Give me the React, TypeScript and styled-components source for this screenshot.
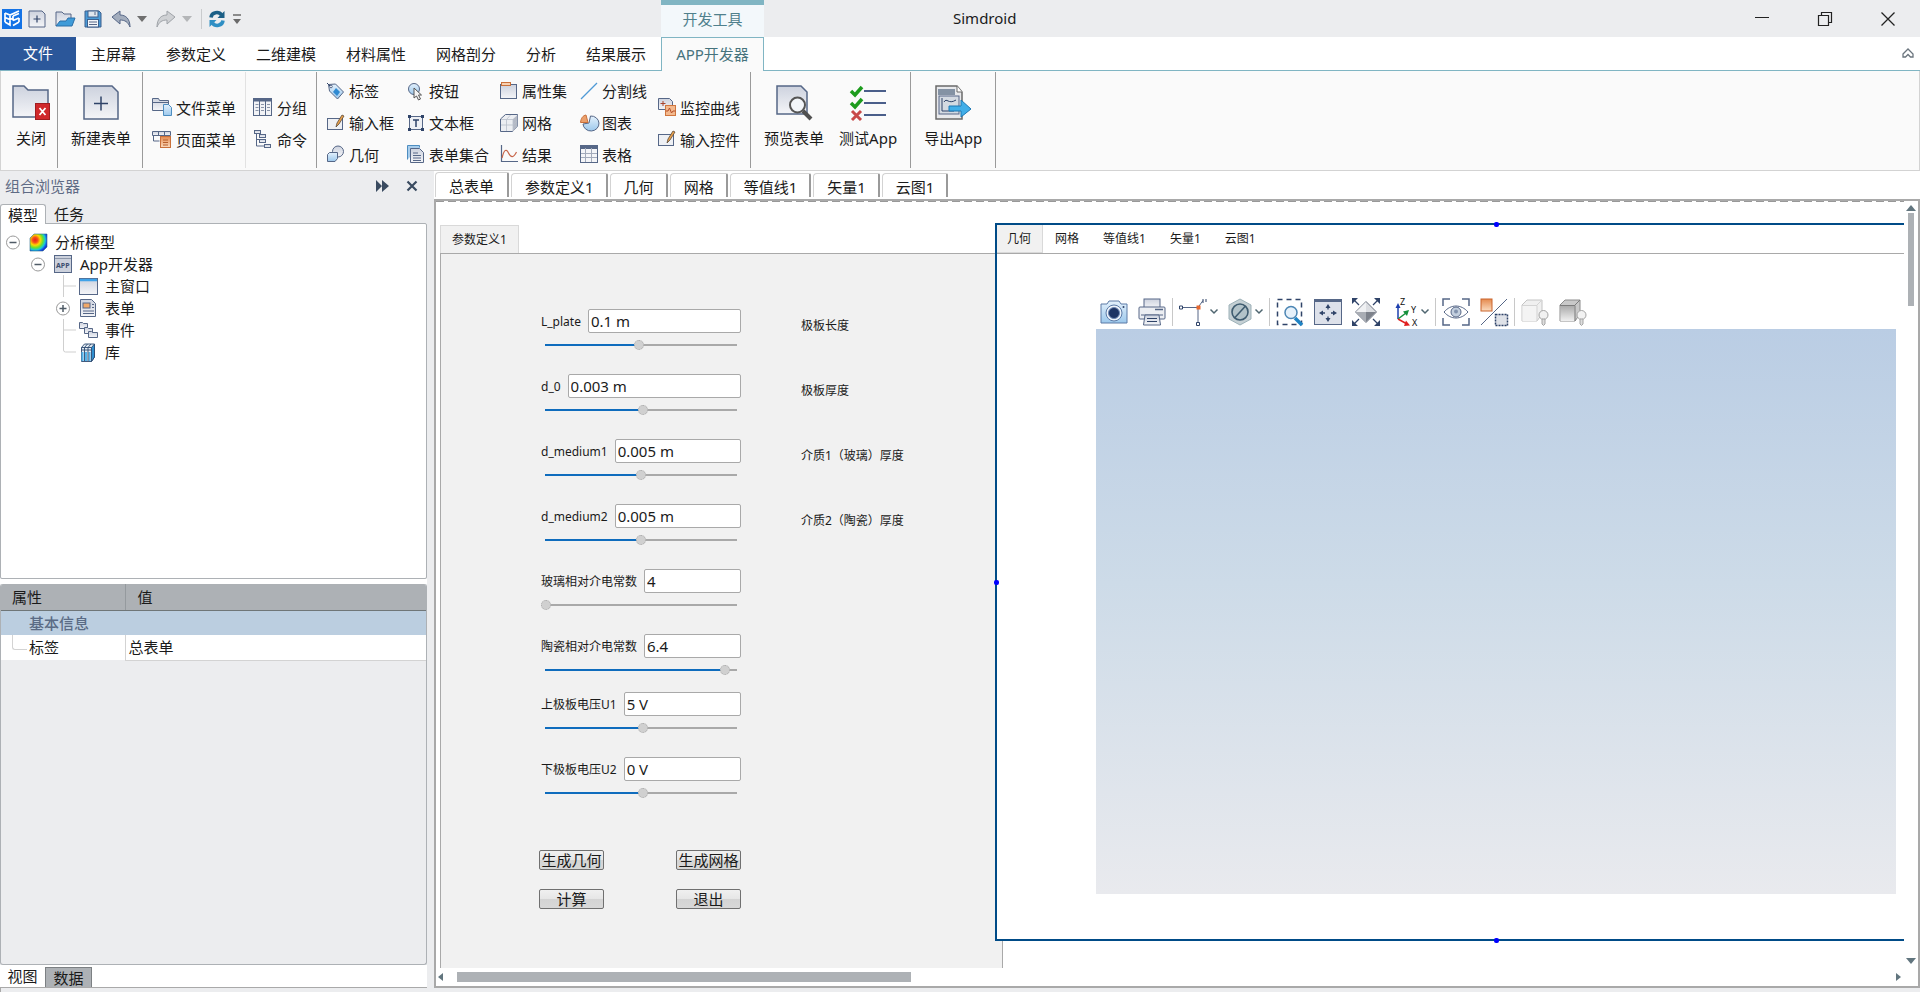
import React, { useState } from 'react';
import styled, { createGlobalStyle, css } from 'styled-components';

const Global = createGlobalStyle`
  * { box-sizing: border-box; }
  html, body { margin: 0; height: 100%; }
  body, button, input {
    font-family: "Noto Sans", "Noto Sans CJK SC", sans-serif;
    font-size: 15px;
    color: #1a1a1a;
  }
  button { background: none; border: 0; padding: 0; margin: 0; cursor: default; white-space: nowrap; }
  ul { list-style: none; margin: 0; padding: 0; }
`;

/* ---------- icons ---------- */

const NAVY = '#566787';
const DARK = '#2f4368';
const STEEL = 'url(#steel)';
const BLUE = 'url(#blue)';
const ORANGE = 'url(#orange)';

const SharedDefs = styled.svg`
  position: absolute;
  width: 0;
  height: 0;
`;

const Gradients = () => (
  <SharedDefs aria-hidden="true">
    <defs>
      <linearGradient id="steel" x1="0" y1="0" x2="0" y2="1">
        <stop offset="0" stopColor="#cdd2de" /><stop offset="1" stopColor="#f4f5f8" />
      </linearGradient>
      <linearGradient id="blue" x1="0" y1="0" x2="0" y2="1">
        <stop offset="0" stopColor="#e4f1fc" /><stop offset="1" stopColor="#9cc8ec" />
      </linearGradient>
      <linearGradient id="orange" x1="0" y1="0" x2="0" y2="1">
        <stop offset="0" stopColor="#e58a4e" /><stop offset="1" stopColor="#fbdcc0" />
      </linearGradient>
      <linearGradient id="gray" x1="0" y1="0" x2="0" y2="1">
        <stop offset="0" stopColor="#a9a9a9" /><stop offset="1" stopColor="#f0f0f0" />
      </linearGradient>
      <radialGradient id="rainbow" cx="0.3" cy="0.35" r="0.85">
        <stop offset="0" stopColor="#e8201c" /><stop offset="0.18" stopColor="#f4501a" />
        <stop offset="0.36" stopColor="#ffd800" /><stop offset="0.54" stopColor="#6be02c" />
        <stop offset="0.7" stopColor="#16c8d8" /><stop offset="0.84" stopColor="#1440e8" />
        <stop offset="1" stopColor="#0a1ca0" />
      </radialGradient>
    </defs>
  </SharedDefs>
);

type IconProps = { w: number; h?: number; children: React.ReactNode };
const Glyph = styled.svg`
  display: block;
  flex: none;
  overflow: visible;
`;
const Icon = ({ w, h = w, children }: IconProps) => (
  <Glyph width={w} height={h} viewBox={`0 0 ${w} ${h}`} fill="none" aria-hidden="true">{children}</Glyph>
);

const LogoIcon = () => (
  <Icon w={20}>
    <rect width="20" height="20" fill="#1473e6" />
    <path d="M3 4l5 2 9-4M3 8.500l5 2 3-1.300M3 13l5 3V6M3 4v9M11 7l6-2.500M11 11.500l6-2.500M11 16.500l6-3.500M11 7v4.500M17 9v4" stroke="#fff" strokeWidth="1.700" />
  </Icon>
);
const NewDocIcon = () => (
  <Icon w={18}>
    <path d="M1 1h13l3 3v13H1z" fill={STEEL} stroke={NAVY} />
    <path d="M9 5.500v7M5.500 9h7" stroke={DARK} strokeWidth="1.200" />
  </Icon>
);
const OpenIcon = () => (
  <Icon w={20} h={18}>
    <path d="M1 16V2h6l2 2h7v4" fill={STEEL} stroke={NAVY} />
    <path d="M1 16l4-5h6l2-3h7l-3 8z" fill="#3f9bd8" stroke="#2b6fa8" />
  </Icon>
);
const SaveIcon = () => (
  <Icon w={18}>
    <path d="M1 1h14l2 2v14H1z" fill="#4a9ad6" stroke="#3c5f8c" />
    <rect x="4" y="1" width="10" height="6" fill="#dfe6ee" stroke="#3c5f8c" />
    <rect x="3.500" y="9.500" width="11" height="7.500" fill="#f4f6f9" stroke="#3c5f8c" />
    <path d="M5 12h8M5 14.500h8M11 2v3" stroke={NAVY} />
  </Icon>
);
const UndoIcon = () => (
  <Icon w={20} h={18}>
    <path d="M1 7l8-6v4c6 0 10 4 10 12-2-5-5-7-10-7v4z" fill="#a3adbd" stroke={NAVY} />
  </Icon>
);
const RedoIcon = () => (
  <Icon w={20} h={18}>
    <path d="M19 7l-8-6v4C5 5 1 9 1 17c2-5 5-7 10-7v4z" fill="#cfd1d4" stroke="#9fa3a8" />
  </Icon>
);
const Caret = ({ color }: { color: string }) => (
  <Icon w={10} h={6}><path d="M0 0h10L5 6z" fill={color} /></Icon>
);
const RefreshIcon = () => (
  <Icon w={18}>
    <path d="M3 7.500C3.500 2 11 1 13.500 5" stroke="#1b5f86" strokeWidth="3.500" />
    <path d="M16.500 1v7h-7z" fill="#1b5f86" />
    <path d="M15 10.500C14.500 16 7 17 4.500 13" stroke="#2f8fc4" strokeWidth="3.500" />
    <path d="M1.500 17v-7h7z" fill="#2f8fc4" />
  </Icon>
);
const CustomizeIcon = () => (
  <Icon w={10} h={12}><path d="M1 2h8" stroke="#8b8b8b" strokeWidth="2" /><path d="M1 6h8l-4 5z" fill="#6a6a6a" /></Icon>
);

const CloseFolderIcon = () => (
  <Icon w={40} h={38}>
    <path d="M2 34V3h11l4 4h20v27z" fill={STEEL} stroke={NAVY} strokeWidth="1.500" />
    <rect x="24.500" y="20.500" width="14" height="16" fill="#d0282b" stroke="#a01c1f" />
    <path d="M28.500 25l6 7M34.500 25l-6 7" stroke="#fff" strokeWidth="1.800" />
  </Icon>
);
const NewFormIcon = () => (
  <Icon w={36} h={38}>
    <path d="M1 3h28l6 6v27H1z" fill={STEEL} stroke={NAVY} strokeWidth="1.500" />
    <path d="M18 13.500v14M11 20.500h14" stroke={DARK} strokeWidth="1.500" />
  </Icon>
);
const FileMenuIcon = () => (
  <Icon w={20} h={18}>
    <path d="M.5 12.500V.5h6l1 2h9v10z" fill={STEEL} stroke={NAVY} />
    <path d="M1 4.500h15" stroke={NAVY} />
    <path d="M11.500 6.500h5l3 3v8h-8z" fill={BLUE} stroke="#4d8dc0" />
  </Icon>
);
const PageMenuIcon = () => (
  <Icon w={20} h={18}>
    <path d="M.5 1.500h18v4H.5zM6.500 1.500v4M12.500 1.500v4" fill={STEEL} stroke={NAVY} />
    <path d="M1.500 6v5h6" stroke={NAVY} />
    <rect x="8.500" y="6.500" width="10" height="11" fill={ORANGE} stroke="#c9703a" />
    <path d="M11 10h5M11 12.500h5M11 15h5" stroke="#b65f2c" />
  </Icon>
);
const GroupIcon = () => (
  <Icon w={20} h={20}>
    <rect x=".5" y="1.500" width="18" height="17" fill="#f2f3f6" stroke={NAVY} />
    <path d="M1 3h18" stroke={NAVY} strokeWidth="3" />
    <path d="M6.500 4v14M12.500 4v14" stroke={NAVY} />
    <path d="M2.500 7.500h3M2.500 10.500h3M2.500 13.500h3M8 7.500h3M8 10.500h3M8 13.500h3M14 7.500h3M14 10.500h3M14 13.500h3" stroke="#8a94a8" />
  </Icon>
);
const CommandIcon = () => (
  <Icon w={20} h={20}>
    <path d="M3.500 4v13h8M3.500 10.500h4" stroke={NAVY} />
    <g fill={STEEL} stroke={NAVY}>
      <rect x="1.500" y="1.500" width="6" height="3" /><rect x="6.500" y="5.500" width="6" height="3" />
      <rect x="6.500" y="10.500" width="6" height="3" /><rect x="11.500" y="15.500" width="6" height="3" />
    </g>
  </Icon>
);
const TagIcon = () => (
  <Icon w={18}>
    <path d="M1.500 2.500l7-.5 8 8-6 7-8-8z" fill={BLUE} stroke={NAVY} />
    <path d="M9 6l4 4-3 4-4-4z" fill="#2f8ad2" /><circle cx="4" cy="4.500" r="1.300" fill="#fff" stroke={NAVY} />
    <path d="M0 1l3 3" stroke={DARK} />
  </Icon>
);
const CursorIcon = () => (
  <Icon w={18}>
    <circle cx="7" cy="7" r="5.500" fill={BLUE} stroke={NAVY} />
    <path d="M7 6v10l2.500-2 2 4 2-1-2-4h3z" fill="#f4f4f4" stroke="#555" />
  </Icon>
);
const PropSetIcon = () => (
  <Icon w={18}>
    <rect x=".5" y="2.500" width="16" height="14" fill={STEEL} stroke={NAVY} />
    <rect x="1.500" y=".5" width="9" height="3" fill="#f8d0b0" stroke="#c9703a" />
  </Icon>
);
const SlashIcon = () => (
  <Icon w={18}><path d="M1 17L17 1" stroke="#4f9ad6" strokeWidth="1.200" /></Icon>
);
const InputIcon = () => (
  <Icon w={18}>
    <rect x=".5" y="4.500" width="15" height="11" fill="#eef0f4" stroke={NAVY} />
    <path d="M9 13l1-4 5-8 2 1-5 8z" fill="#e9a04a" stroke="#5a4a3a" strokeWidth=".8" />
  </Icon>
);
const TextBoxIcon = () => (
  <Icon w={18}>
    <rect x="2.500" y="2.500" width="13" height="13" fill="#eef0f4" stroke={NAVY} />
    <path d="M6 6h6M9 6v7" stroke={DARK} strokeWidth="1.500" />
    <path d="M1 1h3v3H1zM14 1h3v3h-3zM1 14h3v3H1zM14 14h3v3h-3z" fill={DARK} />
  </Icon>
);
const MeshIcon = () => (
  <Icon w={18}>
    <path d="M.5 5l5-4.500h12V12l-5 5.500H.5z" fill="#eceef2" stroke={NAVY} />
    <path d="M13 5v12.500l4.500-5.500V1z" fill="#b4bac6" />
    <path d="M1 5.500h12M6.500 17V5.500l4-4.500M1 11h12l4-4M13 17V5.500" stroke="#b9bfca" strokeWidth=".8" />
  </Icon>
);
const ChartIcon = () => (
  <Icon w={18}>
    <path d="M10.500 2a8 7.500 0 1 1-7.500 8l6 -1z" fill={BLUE} stroke={NAVY} />
    <path d="M.5 8.500C1 4 3 1.500 6 1l2 7.500z" fill="#eba06c" stroke="#c9703a" />
  </Icon>
);
const GeometryIcon = () => (
  <Icon w={18}>
    <circle cx="11" cy="6.500" r="5.500" fill={STEEL} stroke={NAVY} />
    <path d="M.5 9.500l2-2h8v6l-2.500 3H.5z" fill={BLUE} stroke={NAVY} />
  </Icon>
);
const FormSetIcon = () => (
  <Icon w={18}>
    <path d="M.5 14.500V.5h12v2" fill="#a8cdec" stroke="#4d8dc0" />
    <path d="M3.500 3.500h9l4 4v10h-13z" fill={STEEL} stroke={NAVY} />
    <path d="M6 8h5M6 10.500h8M6 13h8M6 15.500h8" stroke={NAVY} />
  </Icon>
);
const ResultIcon = () => (
  <Icon w={18}>
    <path d="M1.500 0v16.500H18" stroke={NAVY} strokeWidth="1.200" />
    <path d="M2 13C4 5 6 3 8.500 8s5 5 8-1" stroke="#c8664a" strokeWidth="1.200" />
  </Icon>
);
const TableIcon = () => (
  <Icon w={18}>
    <rect x=".5" y=".5" width="17" height="17" fill="#f4f5f8" stroke={NAVY} />
    <path d="M1 2.500h16" stroke={NAVY} strokeWidth="3" />
    <path d="M1 8.500h16M1 12.500h16M5.500 3v14M11.500 3v14" stroke="#a3abbb" />
  </Icon>
);
const MonitorIcon = () => (
  <Icon w={18}>
    <path d="M.5 .5h11l3 3v8H.5z" fill={STEEL} stroke={NAVY} />
    <path d="M5 3v5M2.500 5.500h5" stroke="#a8442c" />
    <rect x="7.500" y="7.500" width="10" height="10" fill="#f3b98e" stroke="#d0763e" />
    <path d="M8 13h2l1.500-3 2 5 1.500-2h2.500" stroke="#b6502a" />
  </Icon>
);
const PreviewIcon = () => (
  <Icon w={36} h={38}>
    <path d="M1 3h24l6 6v22H1z" fill={STEEL} stroke={NAVY} strokeWidth="1.500" />
    <path d="M27 28l8 8" stroke="#505050" strokeWidth="4" />
    <circle cx="21.500" cy="22" r="7.500" fill="#f3f6fa" stroke="#555" strokeWidth="2" />
  </Icon>
);
const TestIcon = () => (
  <Icon w={36} h={38}>
    <path d="M1 8l4 4 7-8M1 20l4 4 7-8" stroke="#1d9c1d" strokeWidth="3.500" />
    <path d="M2 28l9 9M11 28l-9 9" stroke="#c84848" strokeWidth="3" />
    <path d="M14 8h22M14 20h22M14 32h22" stroke="#4a5e8a" strokeWidth="2" />
  </Icon>
);
const ExportIcon = () => (
  <Icon w={36} h={38}>
    <path d="M1 3h21l5 6v27H1z" fill="#e8e9ec" stroke="#6a6a6a" strokeWidth="1.500" />
    <path d="M22 3v6h5" fill="#fff" stroke="#6a6a6a" />
    <path d="M3 6h17v6H3z" fill="#8492a4" />
    <rect x="4" y="13" width="20" height="18" fill="#d4dae2" stroke={NAVY} />
    <path d="M7 15v13h12M9 19c3-5 4 3 12-2" stroke={DARK} />
    <path d="M14 23h12v-6l10 9-10 8v-6H14z" fill="#41aee8" stroke="#1d78b4" />
  </Icon>
);

const ModelIcon = () => (
  <Icon w={19}><path d="M1 5l4-4h13v13l-4 4H1z" fill="url(#rainbow)" stroke="#2c6b8a" strokeWidth=".6" /></Icon>
);
const AppLabel = styled.text`
  font: 700 7px "Noto Sans", sans-serif;
  fill: #3c4d70;
`;
const AppIcon = () => (
  <Icon w={19}>
    <rect x=".5" y=".5" width="17" height="17" fill="#ccd1dc" stroke={NAVY} />
    <path d="M1 3.500h16" stroke="#8d97aa" />
    <AppLabel x="2" y="13">APP</AppLabel>
  </Icon>
);
const WindowIcon = () => (
  <Icon w={19}>
    <rect x=".5" y="1.500" width="18" height="16" fill={STEEL} stroke={NAVY} />
    <path d="M1 3h17" stroke="#3fa2e8" strokeWidth="2.500" />
  </Icon>
);
const FormIcon = () => (
  <Icon w={19}>
    <path d="M1.500 .5h11l4 4v13h-15z" fill={STEEL} stroke={NAVY} />
    <rect x="4" y="4" width="7" height="5" fill="#f0a868" stroke={NAVY} />
    <path d="M13 5.500h2M13 8.500h2M4 12h11M4 14.500h11" stroke={NAVY} />
  </Icon>
);
const EventIcon = () => (
  <Icon w={19}>
    <g fill={STEEL} stroke={NAVY}>
      <path d="M.5 7.500v-6h3l1 1h4v5z" /><path d="M5.500 12.500v-6h3l1 1h4v5z" /><path d="M9.500 16.500v-6h3l1 1h5v5z" />
    </g>
  </Icon>
);
const LibraryIcon = () => (
  <Icon w={19}>
    <path d="M2.500 4.500l3-3.500h10v13l-3 4.500h-10z" fill="#e3ebf2" stroke="#2c4a70" strokeWidth=".9" />
    <path d="M12.500 4.500l3-3.500v13l-3 4.500z" fill="#2f8fd0" stroke="#2c4a70" strokeWidth=".9" />
    <path d="M3.500 9v9M7 9v9M10.500 9v9" stroke="#56b4ea" strokeWidth="2" />
    <path d="M5.500 18V4.500l3-3.500M9 18V4.500L12 1M2.500 4.500h10M2.500 7h10" stroke="#2c4a70" strokeWidth=".9" />
  </Icon>
);

const CameraIcon = () => (
  <Icon w={28}>
    <path d="M1 6h6l2-3h10l2 3h6v19H1z" fill={BLUE} stroke="#5c7aa6" />
    <circle cx="14" cy="15" r="8" fill="#eef4fb" stroke="#5c7aa6" />
    <circle cx="14" cy="15" r="5.500" fill="#1d3464" stroke="#6d88b4" />
    <circle cx="23.500" cy="9" r="1" fill={DARK} />
  </Icon>
);
const PrinterIcon = () => (
  <Icon w={28}>
    <rect x="6" y="1" width="16" height="9" fill={STEEL} stroke={NAVY} />
    <rect x="1" y="9" width="26" height="12" rx="1" fill="#eceef2" stroke={NAVY} />
    <path d="M17 11.500h8" stroke={NAVY} strokeWidth="1.500" /><path d="M3 17h22" stroke={NAVY} />
    <path d="M7 17h14l1.500 10h-17z" fill={STEEL} stroke={NAVY} />
    <path d="M9 20.500h10M9 23.500h10" stroke={DARK} />
  </Icon>
);
const PickIcon = () => (
  <Icon w={28}>
    <path d="M3 9.500h16v16M19 9.500l5-7" stroke={NAVY} />
    <path d="M.5 8h3v3h-3zM17.500 24.500h3v3h-3z" fill="#fff" stroke={DARK} />
    <rect x="17.500" y="7.500" width="4" height="4" fill="#e8672c" />
    <path d="M24 1v4M27 1v3" stroke={DARK} />
  </Icon>
);
const HexIcon = () => (
  <Icon w={24} h={28}>
    <path d="M12 1l11 6v14l-11 6-11-6V7z" fill="#c5d0d4" stroke="#9db1b8" />
    <circle cx="12" cy="14" r="8" fill="#b3c3c9" stroke="#3f5c70" strokeWidth="1.600" />
    <path d="M6.500 20L17.500 8" stroke="#3f5c70" strokeWidth="1.600" />
  </Icon>
);
const Chevron = () => (
  <Icon w={8} h={5}><path d="M.5 .5L4 4 7.500 .5" stroke="#4f6670" strokeWidth="1.500" /></Icon>
);
const ZoomBoxIcon = () => (
  <Icon w={28}>
    <rect x="1.500" y="1.500" width="24" height="25" stroke={DARK} strokeWidth="1.500" strokeDasharray="5 4" />
    <rect x="9" y="8" width="15" height="16" fill="#fff" />
    <path d="M19 20l7 7" stroke="#1f83c4" strokeWidth="3.500" />
    <circle cx="15" cy="14.500" r="6" fill="#e6f1fa" stroke="#4d86b4" strokeWidth="1.500" />
  </Icon>
);
const FitIcon = () => (
  <Icon w={28}>
    <rect x=".5" y="1.500" width="27" height="25" fill="#dde1ea" stroke={NAVY} />
    <path d="M0 2.500h28" stroke={NAVY} strokeWidth="3" />
    <path d="M14 8.500v3M14 18.500v3M7 15h4M17 15h4" stroke={DARK} strokeWidth="1.300" />
    <path d="M11.500 10l2.500-4 2.500 4zM11.500 20l2.500 4 2.500-4zM9 12.500L5 15l4 2.500zM19 12.500l4 2.500-4 2.500z" fill={DARK} />
  </Icon>
);
const DiamondIcon = () => (
  <Icon w={28}>
    <path d="M14 3.500L24.500 14 14 24.500 3.500 14z" fill="#dcdee2" stroke="#6b7280" />
    <path d="M14 14h10L14 24z" fill="#7d828b" /><path d="M4 14h10v10z" fill="#a9adb4" />
    <path d="M14 4v10H4z" fill="#f0f1f3" />
    <path d="M2 2l5 5M26 2l-5 5M2 26l5-5M26 26l-5-5" stroke={DARK} strokeWidth="1.300" />
    <path d="M0 0h6L0 6zM28 0h-6l6 6zM0 28h6l-6-6zM28 28h-6l6-6z" fill={DARK} />
  </Icon>
);
const AxisLetter = styled.text`
  font: 9px "Noto Sans", sans-serif;
  fill: #111;
`;
const TriadIcon = () => (
  <Icon w={28}>
    <path d="M8 21V8" stroke="#1d3fae" strokeWidth="1.500" /><path d="M5.500 10L8 5l2.500 5z" fill="#1d3fae" />
    <path d="M8 21l8-6" stroke="#15903c" strokeWidth="1.500" /><path d="M13 13.500l6-1.500-2 6z" fill="#15903c" />
    <path d="M8 21l9 5" stroke="#e02020" strokeWidth="1.500" /><path d="M16 22.500l4 5-6 .5z" fill="#e02020" />
    <AxisLetter x="10" y="7">Z</AxisLetter><AxisLetter x="21" y="15">Y</AxisLetter><AxisLetter x="22" y="28">X</AxisLetter>
  </Icon>
);
const EyeIcon = () => (
  <Icon w={28}>
    <path d="M1 8V1h7M20 1h7v7M27 20v7h-7M8 27H1v-7" stroke={NAVY} strokeWidth="1.500" />
    <path d="M2 14c7-8 17-8 24 0-7 8-17 8-24 0z" fill="#fff" stroke={NAVY} />
    <circle cx="14" cy="14" r="5" fill="#c3cfde" stroke={NAVY} /><circle cx="14" cy="13.500" r="2" fill="#8293ae" />
  </Icon>
);
const SwapIcon = () => (
  <Icon w={28}>
    <rect x="1" y="1" width="11" height="12" fill={ORANGE} stroke="#c9642c" />
    <path d="M1 27L27 1" stroke={NAVY} />
    <rect x="15.500" y="16.500" width="12" height="11" fill="#dfe2e8" stroke={DARK} strokeWidth="1.500" strokeDasharray="2 1" />
  </Icon>
);
const CubeBulbIcon = ({ dark }: { dark?: boolean }) => (
  <Icon w={28}>
    <path d="M1 7l5-5h15v14l-5 7H1z" fill={dark ? '#c9c9c9' : '#f0f0f0'} stroke={dark ? '#8c8c8c' : '#c4c4c4'} />
    <path d="M1.500 7.500h14V23h-14z" fill={dark ? 'url(#gray)' : '#f4f4f4'} />
    <path d="M1 7.500h15V23M16 7l5-5" stroke={dark ? '#7c7c7c' : '#d4d4d4'} />
    <circle cx="22.500" cy="17" r="4.500" fill="#f2f2f2" stroke="#a4a4a4" />
    <path d="M21 21h3v5l-1.500 1.500L21 26z" fill="#ddd" stroke="#a4a4a4" />
  </Icon>
);

/* ---------- window frame ---------- */

const Window = styled.div`
  display: flex;
  flex-direction: column;
  height: 100vh;
  min-height: 760px;
  background: #ecedef;
  overflow: hidden;
  line-height: 20px;
`;

const TitleBar = styled.header`
  display: grid;
  grid-template-columns: 661px 103px 1fr auto;
  height: 37px;
  align-items: center;
  flex: none;
`;
const QuickAccess = styled.div`
  display: flex;
  align-items: center;
  padding-left: 2px;
  gap: 6px;
`;
const QuickButton = styled.button<{ $tight?: boolean }>`
  display: block;
  margin-right: ${p => (p.$tight ? 0 : 3)}px;
`;
const QuickDivider = styled.span`
  width: 1px;
  height: 20px;
  background: #c9cbcd;
`;
const ContextTitle = styled.div`
  height: 37px;
  border-top: 5px solid #80b5c3;
  background: #f3f8fb;
  color: #4f808c;
  text-align: center;
  line-height: 28px;
`;
const AppTitle = styled.h1`
  margin: 0;
  padding-left: 189px;
  font-size: 15px;
  font-weight: 400;
  line-height: 34px;
  height: 36px;
`;
const WindowButtons = styled.div`
  display: flex;
  gap: 49px;
  padding-right: 25px;
`;

const MenuBar = styled.nav`
  display: flex;
  flex: none;
  height: 34px;
  background: #fff;
  box-shadow: inset 0 -1px #80b5c3;
`;
const MenuTab = styled.button<{ $kind?: 'file' | 'active' }>`
  padding: 0 15px;
  line-height: 33px;
  ${p => p.$kind === 'file' && css`
    padding: 0 23px;
    height: 33px;
    background: #2b579a;
    color: #fff;
  `}
  ${p => p.$kind === 'active' && css`
    padding: 0 14px;
    line-height: 31px;
    border: 1px solid #80b5c3;
    border-bottom: 0;
    background: #fafafa;
    color: #47737d;
  `}
`;
const CollapseButton = styled.button`
  margin-left: auto;
  padding-right: 6px;
`;

const Ribbon = styled.section`
  display: flex;
  flex: none;
  height: 100px;
  background: #fafafa;
  border: 1px solid #d3d3d3;
  border-top: 0;
`;
const RibbonGroup = styled.div<{ $left?: number; $right?: number; $soft?: boolean }>`
  display: flex;
  gap: 15px;
  padding: 0 ${p => p.$right ?? 9}px 0 ${p => p.$left ?? 9}px;
  border-right: 1px solid transparent;
  border-image: linear-gradient(
    to bottom,
    transparent 2px,
    ${p => (p.$soft ? '#e2e2e2' : '#9a9a9a')} 2px,
    ${p => (p.$soft ? '#e2e2e2' : '#9a9a9a')} 96px,
    transparent 96px
  ) 1;
`;
const BigButton = styled.button`
  display: flex;
  flex-direction: column;
  align-items: center;
  padding-top: 12px;
  gap: 6px;
`;
const SmallColumn = styled.div<{ $rows: 2 | 3; $width?: number }>`
  display: flex;
  flex-direction: column;
  padding-top: ${p => (p.$rows === 2 ? 20 : 4)}px;
  ${p => p.$width && css`width: ${p.$width}px;`}
`;
const SmallButton = styled.button`
  display: flex;
  align-items: center;
  gap: 4px;
  height: 32px;
`;
const ControlColumns = styled.div`
  display: flex;
`;

/* ---------- body ---------- */

const Body = styled.main`
  display: flex;
  flex: 1;
  min-height: 0;
`;
const Sidebar = styled.aside`
  display: flex;
  flex-direction: column;
  flex: 0 0 427px;
  border-bottom: 1px solid #a9a9a9;
`;
const SidebarTitle = styled.div`
  display: flex;
  align-items: center;
  gap: 18px;
  height: 30px;
  padding: 0 10px 0 5px;
  color: #5f6b85;
`;
const SidebarName = styled.h2`
  margin: 0;
  flex: 1;
  font-size: 15px;
  font-weight: 400;
`;
const SideTabs = styled.div`
  display: flex;
  align-items: flex-end;
  height: 22px;
`;
const SideTab = styled.button<{ $active?: boolean }>`
  position: relative;
  height: 19px;
  padding: 0 8px;
  line-height: 20px;
  ${p => p.$active && css`
    height: 20px;
    margin-bottom: -1px;
    padding: 0 7px;
    background: #fff;
    border: 1px solid #adb1b5;
    border-bottom: 0;
    border-radius: 3px 3px 0 0;
  `}
`;
const TreePanel = styled.div`
  flex: 347 1 0;
  min-height: 150px;
  padding-top: 7px;
  background: #fff;
  border: 1px solid #adb1b5;
  border-radius: 0 2px 2px 2px;
`;
const TreeRow = styled.li<{ $level: number }>`
  display: flex;
  align-items: center;
  height: 22px;
  padding-left: ${p => 5 + p.$level * 25}px;
`;
const Gutter = styled.span`
  flex: none;
  width: 15px;
  margin-right: 8px;
`;
const TreeText = styled.span`
  margin-left: 7px;
`;
const PanelGap = styled.div`
  height: 5px;
  background: #fff;
`;
const PropertyPanel = styled.div`
  flex: 380 1 0;
  border: 1px solid #adb1b5;
  border-top: 0;
  border-radius: 3px;
  overflow: hidden;
`;
const PropertyTable = styled.table`
  width: 100%;
  border-collapse: collapse;
  table-layout: fixed;
  tr { height: 25px; }
  th, td { padding: 0; font-weight: 400; text-align: left; line-height: 20px; }
  thead tr { background: #adb1b5; height: 26px; }
  thead th { border-bottom: 1px solid #6f7678; padding-left: 11px; }
  thead th + th { border-left: 1px solid #959a9e; padding-left: 12px; }
  tbody th[colspan] { background: #bbcee0; color: #5a6b85; padding-left: 28px; font-weight: 500; }
`;
const NameColumn = styled.col`
  width: 124px;
`;
const PropertyName = styled.td`
  background: #fff;
`;
const PropertyNameInner = styled.div`
  display: flex;
  height: 25px;
  line-height: 24px;
  &::before {
    content: "";
    width: 14px;
    height: 14px;
    margin: 0 2px 0 11px;
    border: solid #d3d3d3;
    border-width: 0 0 1px 1px;
    border-radius: 0 0 0 3px;
  }
`;
const PropertyValue = styled.td`
  && { padding-left: 3px; }
  background: #fff;
  border-left: 1px solid #d3d3d3;
  border-bottom: 1px solid #d3d3d3;
`;
const BottomTabs = styled.div`
  display: flex;
  height: 22px;
  background: #fff;
`;
const BottomTab = styled.button<{ $active?: boolean }>`
  width: 45px;
  line-height: 22px;
  ${p => p.$active && css`
    width: 47px;
    margin-top: 2px;
    line-height: 20px;
    background: #adb1b5;
    border: 1px solid #7c8083;
    border-bottom: 0;
  `}
`;

const Workspace = styled.section`
  display: flex;
  flex-direction: column;
  flex: 1;
  min-width: 0;
  margin-left: 7px;
  background: #fff;
`;
const DocTabs = styled.div`
  display: flex;
  align-items: flex-end;
  height: 28px;
  padding: 0 0 2px 1px;
  gap: 2px;
`;
const DocTab = styled.button<{ $active?: boolean }>`
  height: 24px;
  padding: 0 12px 0 13px;
  line-height: 26px;
  background: #fff;
  border: 1px solid #d3d3d3;
  border-right: 2px solid #9a9a9a;
  border-bottom: 0;
  border-radius: 4px 2px 0 0;
  ${p => p.$active && css`
    height: 25px;
    padding: 0 13px;
  `}
`;
const Frame = styled.div`
  display: grid;
  grid-template-columns: minmax(0, 1fr) 14px;
  grid-template-rows: minmax(0, 1fr) 18px;
  flex: 1;
  min-height: 0;
  border: 2px solid #a9a9a9;
`;
const Canvas = styled.div`
  display: flex;
  overflow: hidden;
  padding-left: 4px;
  background: repeating-linear-gradient(to right, #999 0 8px, #fff 8px 12px) 0 0 / 100% 1px no-repeat;
`;

const FormWidget = styled.div`
  display: flex;
  flex-direction: column;
  flex: 0 0 563px;
  margin-top: 24px;
`;
const WidgetTabs = styled.div`
  display: flex;
  flex: none;
  height: 28px;
`;
const WidgetTab = styled.button<{ $active?: boolean; $boxed?: boolean }>`
  padding: 0 12px;
  font-size: 12px;
  line-height: 28px;
  ${p => p.$active && css`
    padding: 0 11px 0 10px;
    background: #f1f1f1;
    border-right: 1px solid #d9d9d9;
    border-bottom: 1px solid #d9d9d9;
  `}
  ${p => p.$boxed && css`
    padding: 0 11px;
    border: 1px solid #d9d9d9;
    border-bottom: 0;
  `}
`;
const FormPage = styled.form`
  flex: 1;
  padding: 55px 0 0 100px;
  background: #f1f1f1;
  border: 1px solid #a9a9a9;
  border-bottom: 0;
`;
const FieldList = styled.div`
  display: flex;
  flex-direction: column;
  gap: 17px;
  margin-bottom: 10px;
`;
const Field = styled.div`
  display: grid;
  grid-template-columns: 200px 1fr;
  column-gap: 60px;
  height: 48px;
`;
const FieldControls = styled.div`
  display: flex;
  flex-direction: column;
`;
const FieldLine = styled.div`
  display: flex;
  align-items: center;
  gap: 7px;
`;
const FieldLabel = styled.label`
  padding-top: 2px;
  font-size: 12px;
  line-height: 22px;
  white-space: nowrap;
`;
const FieldNote = styled.span`
  font-size: 12px;
  line-height: 33px;
`;
const FieldInput = styled.input`
  flex: 1;
  min-width: 0;
  height: 24px;
  padding: 0 2px;
  background: #fff;
  border: 1px solid #a9a9a9;
  border-radius: 2px;
  outline: 0;
`;
const Slider = styled.input`
  appearance: none;
  width: 100%;
  height: 12px;
  margin: 6px 0 0;
  background: linear-gradient(
    to right,
    transparent 4px, #0f6cbd 4px, #0f6cbd var(--fill), #a9a9a9 var(--fill),
    #a9a9a9 calc(100% - 4px), transparent calc(100% - 4px)
  ) center / 100% 2px no-repeat;
  &::-webkit-slider-thumb {
    appearance: none;
    width: 10px;
    height: 10px;
    background: #d0d0d0;
    border: 1px dotted #a9a9a9;
    border-radius: 50%;
  }
`;
const ButtonGrid = styled.div`
  display: grid;
  grid-template-columns: 65px 65px;
  gap: 19px 72px;
  margin: 45px 0 0 -2px;
`;
const FormButton = styled.button`
  height: 20px;
  line-height: 18px;
  background: linear-gradient(#f0f0f0, #e6e6e6 50%, #d4d4d4 50%, #d8d8d8);
  border: 1px solid #707070;
  border-radius: 2px;
`;

/* The result view runs on past the right edge of the visible canvas. */
const ViewWidget = styled.div`
  position: relative;
  display: flex;
  flex-direction: column;
  flex: 1 0 auto;
  margin: 22px -92px 27px -8px;
  background: #fff;
  border: 2px solid #004b87;
`;
const Handle = styled.span<{ $side: 'top' | 'left' | 'bottom' }>`
  position: absolute;
  width: 5px;
  height: 5px;
  background: #0000ff;
  border-radius: 2px;
  ${p => p.$side === 'top' && css`top: -3px; left: 50%; margin-left: -2px;`}
  ${p => p.$side === 'bottom' && css`bottom: -4px; left: 50%; margin-left: -2px;`}
  ${p => p.$side === 'left' && css`left: -3px; top: 50%; margin-top: -2px;`}
`;
const ViewBody = styled.div`
  display: flex;
  flex-direction: column;
  flex: 1;
  padding: 40px 98px 45px 99px;
  border-top: 1px solid #a9a9a9;
`;
const ViewTools = styled.div`
  display: flex;
  align-items: center;
  height: 35px;
  padding-left: 4px;
  gap: 10px;
`;
const ViewTool = styled.button<{ $menu?: boolean }>`
  display: flex;
  align-items: center;
  gap: ${p => (p.$menu ? 3 : 0)}px;
`;
const ToolDivider = styled.span`
  width: 1px;
  height: 28px;
  margin: 0 -4px;
  background: #c8c8c8;
`;
const Scene = styled.div`
  flex: 1;
  background: linear-gradient(#bacde4, #cddbe8 45%, #e9eaee);
`;

const VScroll = styled.div`
  display: flex;
  flex-direction: column;
  align-items: center;
  padding: 4px 2px 4px 2px;
`;
const VThumb = styled.div`
  width: 6px;
  height: 93px;
  margin: 2px 0 auto;
  background: #adb1b5;
`;
const HScroll = styled.div`
  display: flex;
  align-items: center;
  padding: 0 3px 0 2px;
`;
const HThumb = styled.div`
  flex: 0 0 31%;
  height: 10px;
  margin: 0 auto 0 14px;
  background: #adb1b5;
`;
const StatusStrip = styled.footer`
  flex: none;
  height: 4px;
  background: #ecedef;
  border-left: 1px solid #a9a9a9;
`;

/* ---------- data ---------- */

const menus = ['主屏幕', '参数定义', '二维建模', '材料属性', '网格剖分', '分析', '结果展示'];

const controlColumns: { width?: number; items: [string, React.ReactNode][] }[] = [
  { width: 80, items: [['标签', <TagIcon />], ['输入框', <InputIcon />], ['几何', <GeometryIcon />]] },
  { width: 93, items: [['按钮', <CursorIcon />], ['文本框', <TextBoxIcon />], ['表单集合', <FormSetIcon />]] },
  { width: 80, items: [['属性集', <PropSetIcon />], ['网格', <MeshIcon />], ['结果', <ResultIcon />]] },
  { width: 78, items: [['分割线', <SlashIcon />], ['图表', <ChartIcon />], ['表格', <TableIcon />]] },
  { items: [['监控曲线', <MonitorIcon />], ['输入控件', <InputIcon />]] },
];

const docTabs = ['总表单', '参数定义1', '几何', '网格', '等值线1', '矢量1', '云图1'];
const viewTabs = ['几何', '网格', '等值线1', '矢量1', '云图1'];

type Param = { id: string; label: string; value: string; level: number; note?: string };
const params: Param[] = [
  { id: 'l-plate', label: 'L_plate', value: '0.1 m', level: 49, note: '极板长度' },
  { id: 'd-0', label: 'd_0', value: '0.003 m', level: 51, note: '极板厚度' },
  { id: 'd-medium1', label: 'd_medium1', value: '0.005 m', level: 50, note: '介质1（玻璃）厚度' },
  { id: 'd-medium2', label: 'd_medium2', value: '0.005 m', level: 50, note: '介质2（陶瓷）厚度' },
  { id: 'eps-glass', label: '玻璃相对介电常数', value: '4', level: 0 },
  { id: 'eps-ceramic', label: '陶瓷相对介电常数', value: '6.4', level: 94 },
];
const voltages: Param[] = [
  { id: 'u1', label: '上极板电压U1', value: '5 V', level: 51 },
  { id: 'u2', label: '下极板电压U2', value: '0 V', level: 51 },
];

/* ---------- parts ---------- */

const Big = ({ label, icon }: { label: string; icon: React.ReactNode }) => (
  <BigButton type="button">{icon}{label}</BigButton>
);
const Small = ({ label, icon }: { label: string; icon: React.ReactNode }) => (
  <SmallButton type="button">{icon}{label}</SmallButton>
);

const Expander = ({ open }: { open: boolean }) => (
  <Icon w={15}>
    <circle cx="7" cy="7.500" r="6.500" fill="#fff" stroke="#9a9a9a" />
    <path d={open ? 'M3.500 7.500h7' : 'M3.500 7.500h7M7 4v7'} stroke="#4f5b66" strokeWidth="1.500" />
  </Icon>
);
const Branch = ({ last }: { last?: boolean }) => (
  <Icon w={15} h={22}>
    <path d={last ? 'M7.500 0v9q0 2 2 2H20' : 'M7.500 0v22M7.500 11H20'} stroke="#cfcfcf" />
  </Icon>
);

type NodeProps = { level: number; gutter: React.ReactNode; icon: React.ReactNode; label: string };
const TreeNode = ({ level, gutter, icon, label }: NodeProps) => (
  <TreeRow $level={level}><Gutter>{gutter}</Gutter>{icon}<TreeText>{label}</TreeText></TreeRow>
);

const ParamField = ({ param }: { param: Param }) => {
  const [level, setLevel] = useState(param.level);
  return (
    <Field>
      <FieldControls>
        <FieldLine>
          <FieldLabel htmlFor={param.id}>{param.label}</FieldLabel>
          <FieldInput id={param.id} defaultValue={param.value} />
        </FieldLine>
        <Slider
          type="range"
          aria-label={param.label}
          value={level}
          onChange={e => setLevel(Number(e.target.value))}
          style={{ '--fill': level === 0 ? '4px' : `${level}%` } as React.CSSProperties}
        />
      </FieldControls>
      {param.note && <FieldNote>{param.note}</FieldNote>}
    </Field>
  );
};

export default function App() {
  return (
    <Window>
      <Global />
      <Gradients />
      <TitleBar>
        <QuickAccess>
          <QuickButton type="button" aria-label="Simdroid" $tight><LogoIcon /></QuickButton>
          <QuickButton type="button" aria-label="新建"><NewDocIcon /></QuickButton>
          <QuickButton type="button" aria-label="打开"><OpenIcon /></QuickButton>
          <QuickButton type="button" aria-label="保存"><SaveIcon /></QuickButton>
          <QuickButton type="button" aria-label="撤销" $tight><UndoIcon /></QuickButton>
          <QuickButton type="button" aria-label="撤销列表"><Caret color="#6f6f6f" /></QuickButton>
          <QuickButton type="button" aria-label="重做" $tight><RedoIcon /></QuickButton>
          <QuickButton type="button" aria-label="重做列表"><Caret color="#b4b6b8" /></QuickButton>
          <QuickDivider />
          <QuickButton type="button" aria-label="刷新" $tight><RefreshIcon /></QuickButton>
          <QuickButton type="button" aria-label="自定义"><CustomizeIcon /></QuickButton>
        </QuickAccess>
        <ContextTitle>开发工具</ContextTitle>
        <AppTitle>Simdroid</AppTitle>
        <WindowButtons>
          <button type="button" aria-label="最小化"><Icon w={14}><path d="M0 5.500h14" stroke="#222" /></Icon></button>
          <button type="button" aria-label="还原">
            <Icon w={14}><path d="M.5 3.500h10v10H.5zM3.500 3.500v-3h10v10h-3" stroke="#222" strokeWidth="1.200" /></Icon>
          </button>
          <button type="button" aria-label="关闭窗口">
            <Icon w={14}><path d="M.5 .5l13 13M13.500 .5l-13 13" stroke="#222" strokeWidth="1.300" /></Icon>
          </button>
        </WindowButtons>
      </TitleBar>

      <MenuBar>
        <MenuTab type="button" $kind="file">文件</MenuTab>
        {menus.map(name => <MenuTab key={name} type="button">{name}</MenuTab>)}
        <MenuTab type="button" $kind="active">APP开发器</MenuTab>
        <CollapseButton type="button" aria-label="折叠功能区">
          <Icon w={12} h={12}>
            <path d="M1 6l5-5 5 5v3H8.500L6 6.500 3.500 9H1z" stroke="#6b757e" strokeWidth="1.300" />
          </Icon>
        </CollapseButton>
      </MenuBar>

      <Ribbon>
        <RibbonGroup $left={10} $right={6}><Big label="关闭" icon={<CloseFolderIcon />} /></RibbonGroup>
        <RibbonGroup $left={13} $right={11}><Big label="新建表单" icon={<NewFormIcon />} /></RibbonGroup>
        <RibbonGroup $soft>
          <SmallColumn $rows={2}>
            <Small label="文件菜单" icon={<FileMenuIcon />} />
            <Small label="页面菜单" icon={<PageMenuIcon />} />
          </SmallColumn>
        </RibbonGroup>
        <RibbonGroup $left={7}>
          <SmallColumn $rows={2}>
            <Small label="分组" icon={<GroupIcon />} />
            <Small label="命令" icon={<CommandIcon />} />
          </SmallColumn>
        </RibbonGroup>
        <RibbonGroup $left={10} $right={10}>
          <ControlColumns>
            {controlColumns.map(({ width, items }, i) => (
              <SmallColumn key={i} $rows={items.length === 2 ? 2 : 3} $width={width}>
                {items.map(([label, icon]) => <Small key={label} label={label} icon={icon} />)}
              </SmallColumn>
            ))}
          </ControlColumns>
        </RibbonGroup>
        <RibbonGroup $left={13} $right={13}>
          <Big label="预览表单" icon={<PreviewIcon />} />
          <Big label="测试App" icon={<TestIcon />} />
        </RibbonGroup>
        <RibbonGroup $left={13} $right={13}><Big label="导出App" icon={<ExportIcon />} /></RibbonGroup>
      </Ribbon>

      <Body>
        <Sidebar>
          <SidebarTitle>
            <SidebarName>组合浏览器</SidebarName>
            <button type="button" aria-label="展开">
              <Icon w={13} h={12}><path d="M0 0l6 6-6 6zM6 0l7 6-7 6z" fill="#3a4b60" /></Icon>
            </button>
            <button type="button" aria-label="关闭面板">
              <Icon w={10}><path d="M.5 .5l9 9M9.500 .5l-9 9" stroke="#3a4b60" strokeWidth="2.200" /></Icon>
            </button>
          </SidebarTitle>
          <SideTabs>
            <SideTab type="button" $active>模型</SideTab>
            <SideTab type="button">任务</SideTab>
          </SideTabs>
          <TreePanel>
            <ul>
              <TreeNode level={0} gutter={<Expander open />} icon={<ModelIcon />} label="分析模型" />
              <TreeNode level={1} gutter={<Expander open />} icon={<AppIcon />} label="App开发器" />
              <TreeNode level={2} gutter={<Branch />} icon={<WindowIcon />} label="主窗口" />
              <TreeNode level={2} gutter={<Expander open={false} />} icon={<FormIcon />} label="表单" />
              <TreeNode level={2} gutter={<Branch />} icon={<EventIcon />} label="事件" />
              <TreeNode level={2} gutter={<Branch last />} icon={<LibraryIcon />} label="库" />
            </ul>
          </TreePanel>
          <PanelGap />
          <PropertyPanel>
            <PropertyTable>
              <colgroup><NameColumn /><col /></colgroup>
              <thead><tr><th scope="col">属性</th><th scope="col">值</th></tr></thead>
              <tbody>
                <tr><th colSpan={2}>基本信息</th></tr>
                <tr>
                  <PropertyName><PropertyNameInner>标签</PropertyNameInner></PropertyName>
                  <PropertyValue>总表单</PropertyValue>
                </tr>
              </tbody>
            </PropertyTable>
          </PropertyPanel>
          <BottomTabs>
            <BottomTab type="button">视图</BottomTab>
            <BottomTab type="button" $active>数据</BottomTab>
          </BottomTabs>
        </Sidebar>

        <Workspace>
          <DocTabs>
            {docTabs.map((name, i) => <DocTab key={name} type="button" $active={i === 0}>{name}</DocTab>)}
          </DocTabs>
          <Frame>
            <Canvas>
              <FormWidget>
                <WidgetTabs><WidgetTab type="button" $active $boxed>参数定义1</WidgetTab></WidgetTabs>
                <FormPage>
                  <FieldList>{params.map(p => <ParamField key={p.id} param={p} />)}</FieldList>
                  <FieldList>{voltages.map(p => <ParamField key={p.id} param={p} />)}</FieldList>
                  <ButtonGrid>
                    <FormButton type="button">生成几何</FormButton>
                    <FormButton type="button">生成网格</FormButton>
                    <FormButton type="button">计算</FormButton>
                    <FormButton type="button">退出</FormButton>
                  </ButtonGrid>
                </FormPage>
              </FormWidget>
              <ViewWidget>
                <WidgetTabs>
                  {viewTabs.map((name, i) => <WidgetTab key={name} type="button" $active={i === 0}>{name}</WidgetTab>)}
                </WidgetTabs>
                <ViewBody>
                  <ViewTools>
                    <ViewTool type="button" aria-label="截图"><CameraIcon /></ViewTool>
                    <ViewTool type="button" aria-label="打印"><PrinterIcon /></ViewTool>
                    <ToolDivider />
                    <ViewTool type="button" aria-label="选择" $menu><PickIcon /><Chevron /></ViewTool>
                    <ViewTool type="button" aria-label="过滤" $menu><HexIcon /><Chevron /></ViewTool>
                    <ToolDivider />
                    <ViewTool type="button" aria-label="框选缩放"><ZoomBoxIcon /></ViewTool>
                    <ViewTool type="button" aria-label="适应窗口"><FitIcon /></ViewTool>
                    <ViewTool type="button" aria-label="缩放到模型"><DiamondIcon /></ViewTool>
                    <ViewTool type="button" aria-label="视角" $menu><TriadIcon /><Chevron /></ViewTool>
                    <ToolDivider />
                    <ViewTool type="button" aria-label="显示"><EyeIcon /></ViewTool>
                    <ViewTool type="button" aria-label="反转显示"><SwapIcon /></ViewTool>
                    <ToolDivider />
                    <ViewTool type="button" aria-label="关灯"><CubeBulbIcon /></ViewTool>
                    <ViewTool type="button" aria-label="开灯"><CubeBulbIcon dark /></ViewTool>
                  </ViewTools>
                  <Scene />
                </ViewBody>
                <Handle $side="top" />
                <Handle $side="left" />
                <Handle $side="bottom" />
              </ViewWidget>
            </Canvas>
            <VScroll>
              <Icon w={10} h={6}><path d="M0 6h10L5 0z" fill="#61757e" /></Icon>
              <VThumb />
              <Icon w={10} h={6}><path d="M0 0h10L5 6z" fill="#61757e" /></Icon>
            </VScroll>
            <HScroll>
              <Icon w={5} h={8}><path d="M5 0v8L0 4z" fill="#61757e" /></Icon>
              <HThumb />
              <Icon w={5} h={8}><path d="M0 0v8l5-4z" fill="#61757e" /></Icon>
            </HScroll>
          </Frame>
        </Workspace>
      </Body>
      <StatusStrip />
    </Window>
  );
}
